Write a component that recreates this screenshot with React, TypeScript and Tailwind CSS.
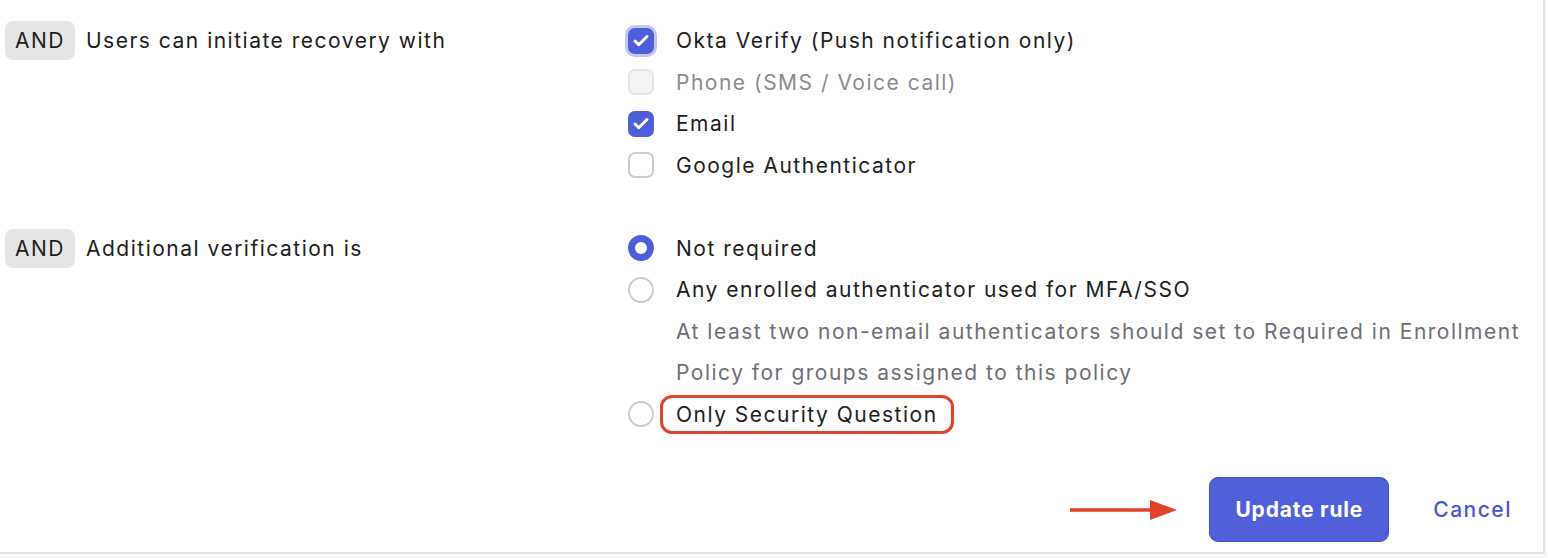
import { Check } from "lucide-react"

type Option = {
  label: string
  checked?: boolean
  disabled?: boolean
  focused?: boolean
}

const recoveryOptions: Option[] = [
  { label: "Okta Verify (Push notification only)", checked: true, focused: true },
  { label: "Phone (SMS / Voice call)", disabled: true },
  { label: "Email", checked: true },
  { label: "Google Authenticator" },
]

function Checkbox({ checked, disabled, focused }: Option) {
  if (checked) {
    return (
      <span
        className={`flex h-[26px] w-[26px] shrink-0 items-center justify-center rounded-[7px] bg-[#4c5ed8] ${
          focused ? "ring-[3px] ring-[#4c5ed8]/35" : ""
        }`}
      >
        <Check className="h-[18px] w-[18px] text-white" strokeWidth={4} />
      </span>
    )
  }
  return (
    <span
      className={`h-[26px] w-[26px] shrink-0 rounded-[7px] border-2 ${
        disabled ? "border-[#e4e4e4] bg-[#f3f3f3]" : "border-[#cbcbcb] bg-white"
      }`}
    />
  )
}

function Radio({ checked }: { checked?: boolean }) {
  return checked ? (
    <span className="h-[26px] w-[26px] shrink-0 rounded-full border-[7px] border-[#4c5ed8] bg-white" />
  ) : (
    <span className="h-[26px] w-[26px] shrink-0 rounded-full border-2 border-[#cbcbcb] bg-white" />
  )
}

function AndLabel({ text }: { text: string }) {
  return (
    <div className="flex items-center gap-[11px]">
      <span className="flex h-[39px] items-center rounded-[8px] bg-[#e5e5e5] px-[10px] text-[#1d1d21]">AND</span>
      <span className="text-[#1d1d21]">{text}</span>
    </div>
  )
}

export default function App() {
  return (
    <div className="min-h-screen bg-[#fafafa] font-['Inter',sans-serif] text-[21px] tracking-[1.5px]">
      <div className="h-[554px] w-[1545px] border-b-2 border-r-2 border-[#e2e2e2] bg-white pt-[20px]">
        <div className="grid grid-cols-[628px_1fr]">
          <div className="flex h-[41.5px] items-center pl-[5px]">
            <AndLabel text="Users can initiate recovery with" />
          </div>
          <div className="flex flex-col">
            {recoveryOptions.map((option) => (
              <label key={option.label} className="flex h-[41.5px] items-center gap-[22px]">
                <Checkbox {...option} />
                <span className={option.disabled ? "text-[#8a8a90]" : "text-[#1d1d21]"}>{option.label}</span>
              </label>
            ))}
          </div>

          <div className="col-span-2 h-[41.5px]" />

          <div className="flex h-[41.5px] items-center pl-[5px]">
            <AndLabel text="Additional verification is" />
          </div>
          <div className="flex flex-col">
            <label className="flex h-[41.5px] items-center gap-[22px]">
              <Radio checked />
              <span className="text-[#1d1d21]">Not required</span>
            </label>
            <label className="flex h-[41.5px] items-center gap-[22px]">
              <Radio />
              <span className="text-[#1d1d21]">Any enrolled authenticator used for MFA/SSO</span>
            </label>
            <div className="pl-[48px] text-[#6e6e76]">
              <div className="flex h-[41.5px] items-center whitespace-nowrap">
                At least two non-email authenticators should set to Required in Enrollment
              </div>
              <div className="flex h-[41.5px] items-center">Policy for groups assigned to this policy</div>
            </div>
            <label className="flex h-[41.5px] items-center gap-[6px]">
              <Radio />
              <span className="flex h-[39px] items-center rounded-[12px] border-[3px] border-[#e2412a] px-[13px] text-[#1d1d21]">
                Only Security Question
              </span>
            </label>
          </div>
        </div>

        <div className="mt-[42px] flex items-center justify-end pr-[31px]">
          <svg width="108" height="24" viewBox="0 0 108 24" className="mr-[31px]">
            <line x1="0" y1="12" x2="82" y2="12" stroke="#e2412a" strokeWidth="3.5" />
            <polygon points="80,2 107,12 80,22" fill="#e2412a" />
          </svg>
          <button className="h-[65px] w-[180px] rounded-[9px] border border-[#3f50c8] bg-[#4f60d9] font-bold tracking-[0.8px] text-white">
            Update rule
          </button>
          <button className="ml-[44px] font-medium tracking-[1.5px] text-[#4657cf]">Cancel</button>
        </div>
      </div>
    </div>
  )
}
